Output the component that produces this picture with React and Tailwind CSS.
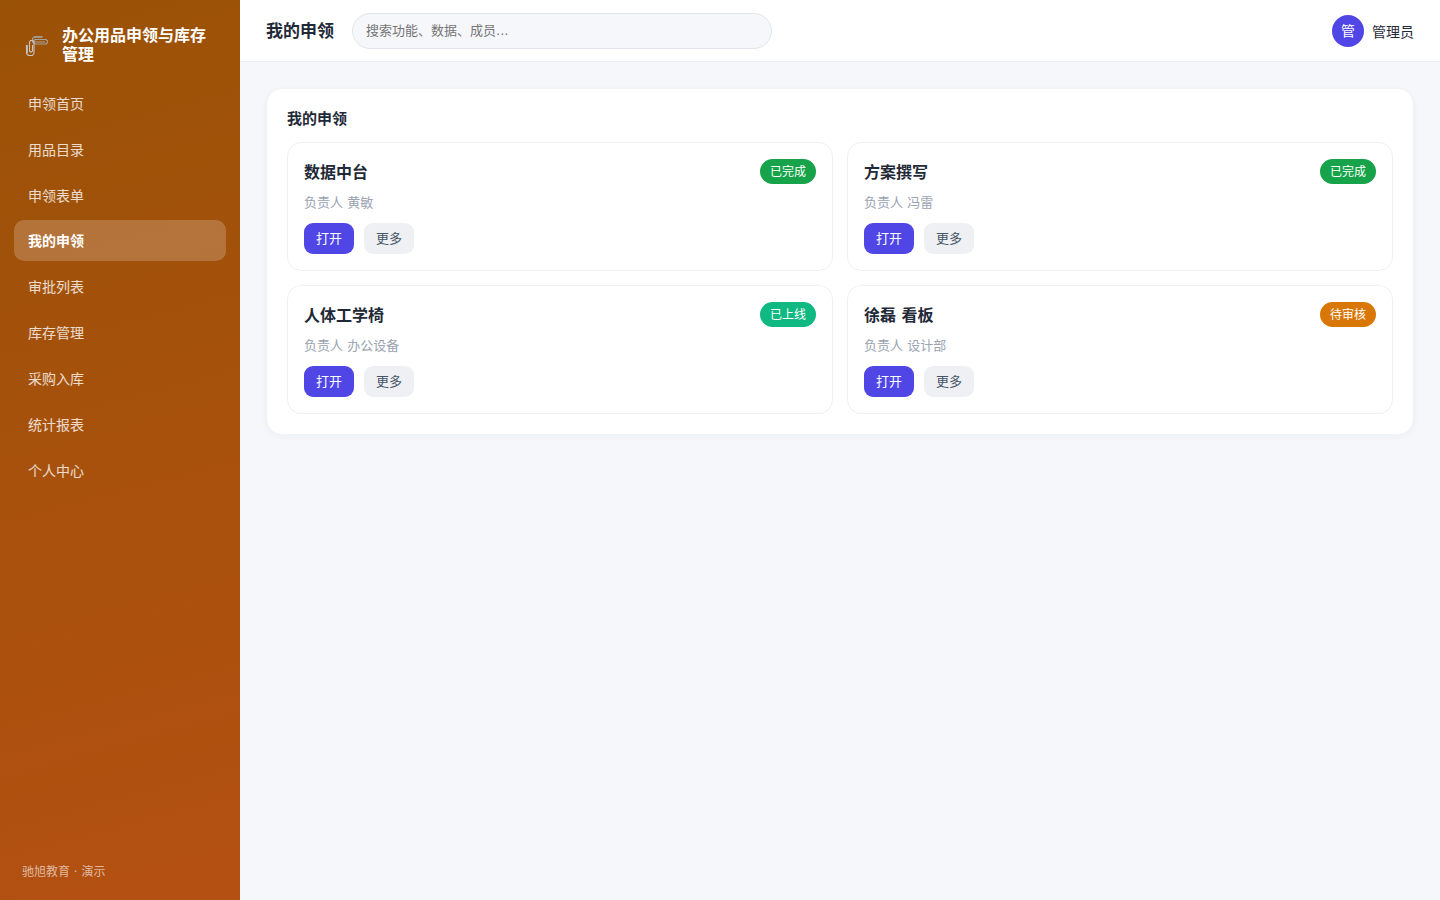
import React from 'react';

const NAV_ITEMS = ['申领首页', '用品目录', '申领表单', '我的申领', '审批列表', '库存管理', '采购入库', '统计报表', '个人中心'];

const REQUESTS = [
  { title: '数据中台', owner: '黄敏', status: '已完成', color: 'bg-[#16a34a]' },
  { title: '方案撰写', owner: '冯雷', status: '已完成', color: 'bg-[#16a34a]' },
  { title: '人体工学椅', owner: '办公设备', status: '已上线', color: 'bg-[#10b981]' },
  { title: '徐磊 看板', owner: '设计部', status: '待审核', color: 'bg-[#d97706]' },
];

const PaperclipsIcon = () => (
  <svg className="w-6 h-6 shrink-0" viewBox="0 0 24 24" fill="none" strokeWidth="1.1" strokeLinejoin="round">
    <path d="M18.500 3.500H11L8.500 5.500v3.500l2 2H22l1.500-1.500V8L22 6.500H11L10 7.500l1 1.500H21" stroke="#a3a09d" />
    <path d="M10 4.200h8.500" stroke="#a3a09d" />
    <path d="M2.500 12v8.500l2 2h4l1.500-2V9L8.500 7.500h-2L5.500 9v9l1 1h1l1-1V12" stroke="#c8c3be" />
    <path d="M3.300 12v8" stroke="#c8c3be" />
  </svg>
);

const Sidebar = () => (
  <aside className="w-60 shrink-0 flex flex-col px-3.5 pt-[26px] pb-[19px] text-white bg-[linear-gradient(165deg,#9a5206,#b45012)]">
    <div className="flex items-center gap-3 h-[38px] px-2.5 mb-[18.4px]">
      <PaperclipsIcon />
      <div className="w-[146px] ml-0.5 text-base leading-[19px] font-bold">办公用品申领与库存管理</div>
    </div>
    <nav className="flex flex-col gap-[4.9px]">
      {NAV_ITEMS.map((item) => (
        <a
          key={item}
          className={
            item === '我的申领'
              ? 'h-[41px] px-3.5 pt-[1.75px] flex items-center rounded-[10px] text-sm font-bold bg-white/20'
              : 'h-[41px] px-3.5 pt-[1.75px] flex items-center rounded-[10px] text-sm text-white/80'
          }
        >
          {item}
        </a>
      ))}
    </nav>
    <div className="mt-auto px-2 text-xs leading-[18px] text-white/60">驰旭教育 · 演示</div>
  </aside>
);

const Header = () => (
  <header className="h-[62px] shrink-0 px-[26px] flex items-center bg-white border-b border-[#eceef3]">
    <h1 className="text-[17px] font-bold mr-[18px] pt-[3px]">我的申领</h1>
    <input
      type="text"
      placeholder="搜索功能、数据、成员..."
      className="w-[420px] h-9 px-[13px] rounded-full border border-[#e2e5ec] bg-[#f5f7fb] text-[13px] placeholder:text-[#757575] outline-none"
    />
    <div className="ml-auto flex items-center gap-2 text-sm">
      <div className="w-8 h-8 rounded-full bg-[#4f46e5] text-white flex items-center justify-center">管</div>
      <span className="pt-0.5">管理员</span>
    </div>
  </header>
);

const RequestCard = ({ request }) => (
  <div className="h-[129px] p-4 rounded-[14px] border border-[#eef0f3] bg-white">
    <div className="h-[25px] flex items-center justify-between">
      <h3 className="pt-0.5 text-base font-bold">{request.title}</h3>
      <span className={`h-[25px] px-2.5 rounded-full text-xs leading-[27px] text-white ${request.color}`}>{request.status}</span>
    </div>
    <p className="mt-[9px] text-[13px] leading-5 text-[#9aa3b2]">负责人 {request.owner}</p>
    <div className="mt-2.5 flex gap-2.5">
      <button className="w-[50px] h-[31px] rounded-[9px] bg-[#4f46e5] text-[13px] text-white">打开</button>
      <button className="w-[50px] h-[31px] rounded-[9px] bg-[#eef0f4] text-[13px] text-[#475569]">更多</button>
    </div>
  </div>
);

const App = () => (
  <div className="flex h-screen bg-[#f5f7fb] text-[#1f2937] font-['DejaVu_Sans','Noto_Sans_CJK_SC',sans-serif]">
    <Sidebar />
    <div className="flex-1 flex flex-col">
      <Header />
      <main className="p-[26px]">
        <section className="p-5 rounded-2xl border border-[#f0f2f6] bg-white shadow-[0_2px_6px_rgba(30,41,59,0.04)]">
          <h2 className="pt-px mb-[13px] text-[15px] leading-[19px] font-bold">我的申领</h2>
          <div className="grid grid-cols-2 gap-3.5">
            {REQUESTS.map((request) => (
              <RequestCard key={request.title} request={request} />
            ))}
          </div>
        </section>
      </main>
    </div>
  </div>
);

export default App;
